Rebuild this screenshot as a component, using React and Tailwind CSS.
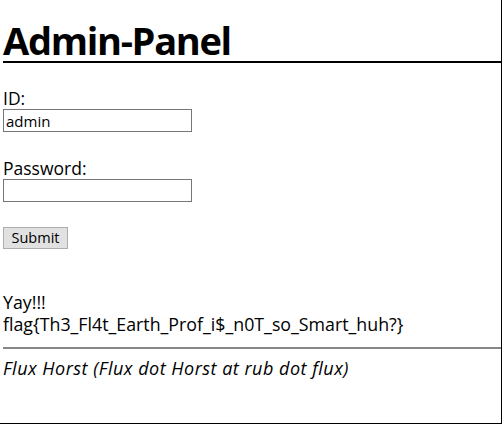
export default function App() {
  return (
    <div className="relative h-[424px] w-[502px] overflow-hidden border-b border-r border-black bg-white pl-[3px] text-black [font-family:'Open_Sans',sans-serif]">
      <h1 className="flex h-[63px] items-end border-b-2 border-black pb-[2px] text-[38px] font-bold leading-none tracking-[-1.3px]">
        Admin-Panel
      </h1>

      <form className="mt-[25px] flex flex-col text-[17.5px] leading-[20px]" onSubmit={(e) => e.preventDefault()}>
        <label htmlFor="id">ID:</label>
        <input
          id="id"
          defaultValue="admin"
          className="mt-[1px] h-[23px] w-[189px] border border-[#767676] px-[2px] text-[15px] leading-none"
        />
        <label htmlFor="pw" className="mt-[26px]">
          Password:
        </label>
        <input
          id="pw"
          type="password"
          className="mt-[1px] h-[23px] w-[189px] border border-[#767676] px-[2px] text-[15px]"
        />
        <button
          type="submit"
          className="mt-[25px] h-[22px] w-[65px] border border-[#adadad] bg-[#e1e1e1] text-[14.5px] leading-none"
        >
          Submit
        </button>
      </form>

      <div className="mt-[42px] text-[17.8px] leading-[22px]">
        <p>Yay!!!</p>
        <p>flag{"{"}Th3_Fl4t_Earth_Prof_i$_n0T_so_Smart_huh?{"}"}</p>
      </div>

      <hr className="mt-[12px] border-t-2 border-[#888]" />

      <p className="mt-[9px] text-[18px] italic leading-[20px] tracking-[0.5px]">Flux Horst (Flux dot Horst at rub dot flux)</p>
    </div>
  );
}
